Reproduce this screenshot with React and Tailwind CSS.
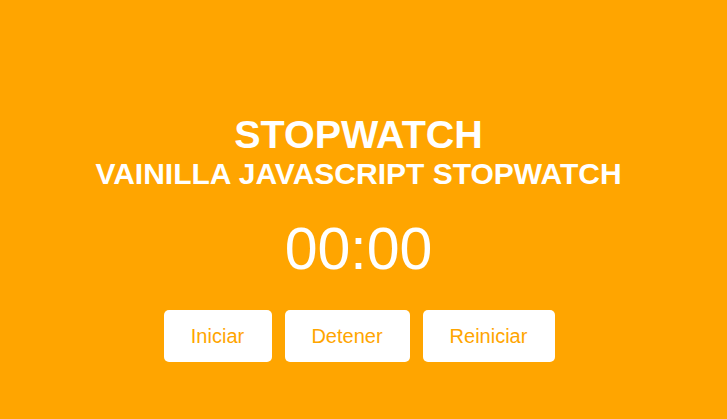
import React, { useState } from 'react';

export default function App() {
  const [seconds] = useState(0);
  const [minutes] = useState(0);

  const pad = (n) => String(n).padStart(2, '0');

  return (
    <div className="w-[727px] h-[419px] bg-[#ffa500] text-white font-['Liberation_Sans',Arial,sans-serif] flex flex-col items-center pt-[114px]">
      <h1 className="mr-[10px] text-[39.5px] leading-[40px] font-bold">STOPWATCH</h1>
      <h2 className="mr-[10px] mt-[4px] text-[30px] leading-[32px] font-bold">VAINILLA JAVASCRIPT STOPWATCH</h2>

      <div className="mr-[10px] mt-[29px] text-[59px] leading-[60px]">
        {pad(minutes)}:{pad(seconds)}
      </div>

      <div className="mr-[9px] mt-[31px] flex gap-[13px]">
        <button className="h-[52px] w-[108px] rounded-[5px] bg-white text-[20px] text-[#ffa500]">Iniciar</button>
        <button className="h-[52px] w-[125px] rounded-[5px] bg-white text-[20px] text-[#ffa500]">Detener</button>
        <button className="h-[52px] w-[132px] rounded-[5px] bg-white text-[20px] text-[#ffa500]">Reiniciar</button>
      </div>
    </div>
  );
}
